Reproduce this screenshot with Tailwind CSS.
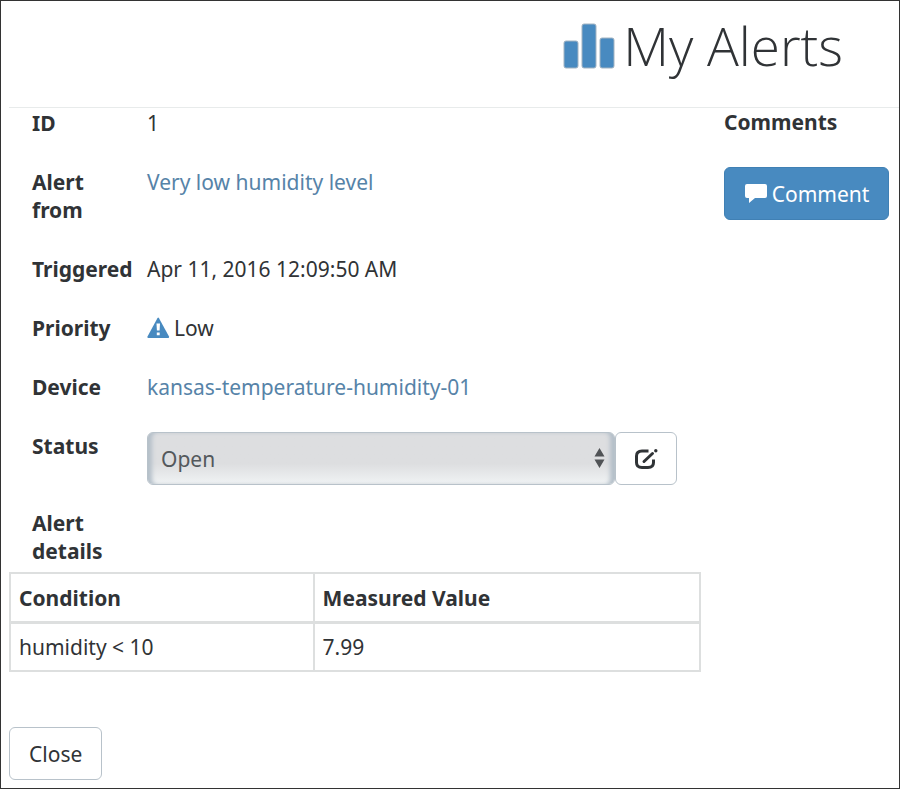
<!DOCTYPE html>
<html lang="en">
<head>
<meta charset="utf-8">
<meta name="viewport" content="width=device-width, initial-scale=1">
<title>My Alerts</title>
<script src="https://cdn.jsdelivr.net/npm/@tailwindcss/browser@4"></script>
</head>
<body class="min-h-screen border border-[#333333] bg-white pl-2 font-['Noto_Sans','Open_Sans',sans-serif] text-[21px] leading-7 text-[#303336]">
  <header class="flex justify-end border-b border-[#e8ebeb] pt-[10px] pr-14 pb-[26px]">
    <h1 class="flex items-center gap-2 font-['Open_Sans','Noto_Sans',sans-serif] text-[53px] leading-[70px] font-light">
      <svg class="h-[46px] w-[52px]" viewBox="0 0 52 46" fill="#488ac0" stroke="#a3b4c2" aria-hidden="true">
        <rect x="1" y="18" width="14" height="27" rx="2"/>
        <rect x="19" y="1" width="14" height="44" rx="2"/>
        <rect x="37" y="15" width="14" height="30" rx="2"/>
      </svg>
      My Alerts
    </h1>
  </header>
  <main class="flex items-start pr-[10px]">
    <section class="mr-[23px] min-w-0 flex-1">
      <dl class="grid grid-cols-[106px_1fr] gap-x-[9px] gap-y-[31px] pt-px pl-[23px]">
        <dt class="font-bold">ID</dt>
        <dd>1</dd>
        <dt class="font-bold">Alert<br>from</dt>
        <dd><a href="#" class="text-[#5683a8]">Very low humidity level</a></dd>
        <dt class="font-bold">Triggered</dt>
        <dd>Apr 11, 2016 12:09:50 AM</dd>
        <dt class="font-bold">Priority</dt>
        <dd class="flex items-center gap-1">
          <svg class="h-[22px] w-[23px]" viewBox="0 0 23 22" aria-hidden="true">
            <path d="M10.4 1.2Q11.2 0 12 1.2L22 19.4Q22.5 21 21 21H1.4Q0 21 .5 19.4Z" fill="#488ac0"/>
            <path d="M9.5 6.5H13L12.6 13.5H9.9ZM9.8 15.5H12.7V18.2H9.8Z" fill="#fff"/>
          </svg>
          Low
        </dd>
        <dt class="font-bold">Device</dt>
        <dd><a href="#" class="text-[#5683a8]">kansas-temperature-humidity-01</a></dd>
        <dt class="font-bold"><label for="status">Status</label></dt>
        <dd class="flex pr-6">
          <div class="relative min-w-0 flex-1">
            <select id="status" class="h-[53px] w-full appearance-none rounded-md border border-[#b8c2ca] bg-linear-to-b from-[#dddee0] from-60% to-[#f0f3f4] px-[13px] text-[#53585c] shadow-[inset_6px_0_4px_-2px_#b4bfc9,inset_-6px_0_4px_-2px_#b4bfc9]">
              <option>Open</option>
              <option>Closed</option>
            </select>
            <svg class="pointer-events-none absolute top-4 right-[10px] h-5 w-[11px]" viewBox="0 0 11 20" fill="#505356" aria-hidden="true">
              <path d="M5.5 0 10.5 8.5H.5ZM5.5 20 10.5 11.5H.5Z"/>
            </svg>
          </div>
          <button type="button" aria-label="Edit status" class="flex h-[53px] w-[62px] items-center justify-center rounded-md border border-[#b8c2ca] bg-white">
            <svg class="h-[22px] w-6" viewBox="0 0 24 22" fill="none" stroke="#303336" stroke-width="3" aria-hidden="true">
              <path d="M14.500 3H8Q2.500 3 2.500 8V14.500Q2.500 19.500 8 19.500H14Q19.500 19.500 19.500 14.500V11.500"/>
              <path d="M10 13.500 18.500 5.500" stroke-width="3" stroke-linecap="round"/>
              <circle cx="21.800" cy="2.800" r="1.700" fill="#303336" stroke="none"/>
            </svg>
          </button>
        </dd>
      </dl>
      <h2 class="w-32 pt-6 pl-[23px] font-bold">Alert details</h2>
      <table class="mt-[7px] w-full table-fixed border-collapse border-2 border-[#dddfdf] text-left">
        <thead>
          <tr>
            <th scope="col" class="w-[44%] border-2 border-b-3 border-[#dddfdf] px-2 pt-[10px] pb-[9px] font-bold">Condition</th>
            <th scope="col" class="border-2 border-b-3 border-[#dddfdf] px-2 pt-[10px] pb-[9px] font-bold">Measured Value</th>
          </tr>
        </thead>
        <tbody>
          <tr>
            <td class="border-2 border-[#dddfdf] px-2 py-[9px]">humidity &lt; 10</td>
            <td class="border-2 border-[#dddfdf] px-2 py-[9px]">7.99</td>
          </tr>
        </tbody>
      </table>
    </section>
    <aside class="w-[165px] shrink-0">
      <h2 class="font-bold">Comments</h2>
      <button type="button" class="mt-[31px] flex h-[53px] w-full items-center justify-center gap-1 rounded-md border border-[#4080b4] bg-[#488ac0] text-white">
        <svg class="h-[21px] w-6" viewBox="0 0 24 21" fill="currentColor" aria-hidden="true">
          <path d="M3 1H21Q23 1 23 3V13Q23 15 21 15H11L5 20V15H3Q1 15 1 13V3Q1 1 3 1Z"/>
        </svg>
        Comment
      </button>
    </aside>
  </main>
  <footer class="pt-[55px] pb-[7px]">
    <button type="button" class="h-[53px] rounded-md border border-[#b8c2ca] bg-white px-[19px]">Close</button>
  </footer>
</body>
</html>
